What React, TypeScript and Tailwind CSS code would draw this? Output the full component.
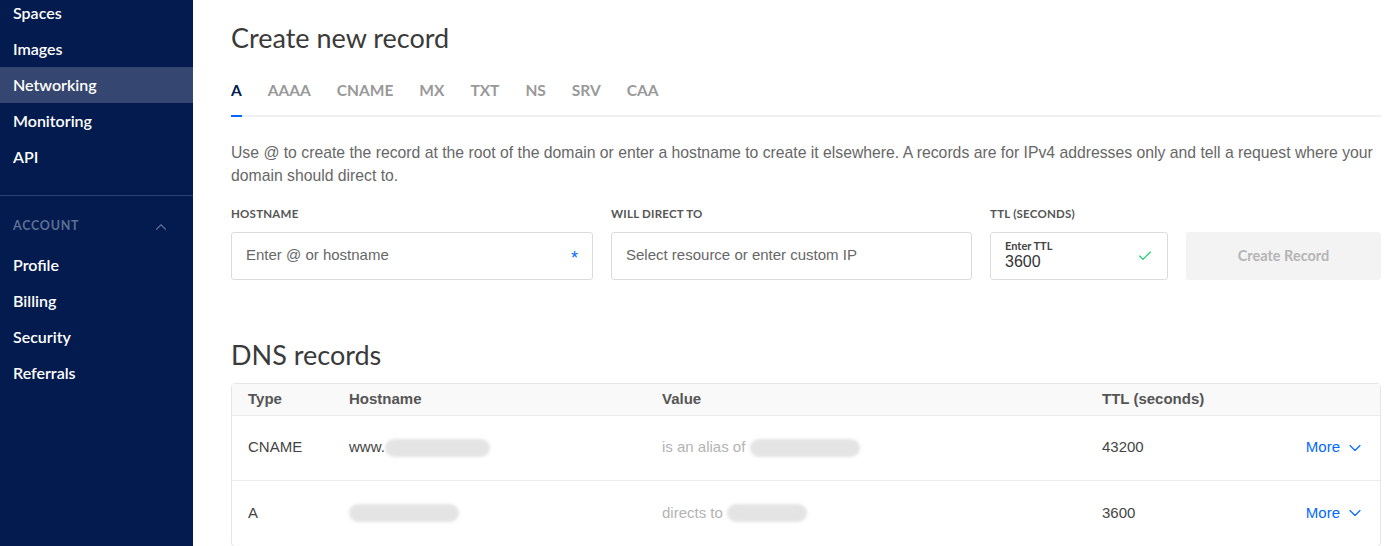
import { ChevronDown, ChevronUp, Check } from 'lucide-react';

const sideTop = ['Spaces', 'Images', 'Networking', 'Monitoring', 'API'];
const sideAccount = ['Profile', 'Billing', 'Security', 'Referrals'];
const tabs = ['A', 'AAAA', 'CNAME', 'MX', 'TXT', 'NS', 'SRV', 'CAA'];

const display = { fontFamily: 'Lato, "Open Sans", sans-serif' };
const row = 'grid grid-cols-[101px_313px_440px_1fr_auto] items-center pl-4 pr-[15px]';

// Blurred-out placeholder for redacted domain names
function Redacted({ w }: { w: string }) {
  return <span className={`inline-block h-[18px] ${w} rounded-full bg-[#e4e4e4] blur-[1.5px] align-middle`} />;
}

function Sidebar() {
  return (
    <aside className="w-[193px] shrink-0 bg-[#031b4e] text-white" style={display}>
      <nav className="-mt-[5px]">
        {sideTop.map((item) => (
          <div
            key={item}
            className={[
              'h-9 px-[13px] flex items-center text-[16px] font-semibold',
              item === 'Networking' ? 'bg-[#354770] font-bold' : '',
            ].join(' ')}
          >
            {item}
          </div>
        ))}
      </nav>
      <div className="mt-5 border-t border-[#2c416c]" />
      <div className="h-[51px] px-[13px] pt-[10px] flex items-center justify-between">
        <span className="text-[12.5px] font-bold tracking-[0.06em] text-[#5d6f93]">ACCOUNT</span>
        <ChevronUp className="h-[18px] w-[18px] text-[#5d6f93] mr-[10px]" strokeWidth={1.5} />
      </div>
      <nav>
        {sideAccount.map((item) => (
          <div key={item} className="h-9 px-[13px] flex items-center text-[16px] font-semibold">
            {item}
          </div>
        ))}
      </nav>
    </aside>
  );
}

function MoreLink() {
  return (
    <span className="flex items-center gap-[5px] text-[#0069ff]">
      More
      <ChevronDown className="h-[20px] w-[20px]" strokeWidth={1.4} />
    </span>
  );
}

export default function App() {
  return (
    <div
      className="flex h-[546px] overflow-hidden bg-white"
      style={{ fontFamily: '"Liberation Sans", Arial, sans-serif' }}
    >
      <Sidebar />

      <main className="flex-1 pl-[38px] pr-[14px] text-[#333]">
        <h1 className="pt-[21px] text-[27px] leading-[34px] font-normal text-[#3a3a3a]" style={display}>
          Create new record
        </h1>

        {/* Record type tabs */}
        <div className="mt-[24px] flex gap-[26px] text-[15.5px] font-bold text-[#999]" style={display}>
          {tabs.map((t) => (
            <span key={t} className={t === 'A' ? 'text-[#031b4e]' : ''}>
              {t}
            </span>
          ))}
        </div>
        <div className="mt-[13px] h-[2px] bg-[#f0f0f0] flex">
          <div className="w-[11px] h-[2px] bg-[#0069ff]" />
        </div>

        <p className="mt-[24px] text-[15.75px] leading-[23px] text-[#676767]">
          Use @ to create the record at the root of the domain or enter a hostname to create it elsewhere. A records are for IPv4 addresses only and tell a request where your domain should direct to.
        </p>

        {/* Form */}
        <div className="mt-[18px] flex gap-[18px] items-end">
          <div className="w-[362px]">
            <label className="block text-[11.5px] font-bold tracking-[0.02em] text-[#555] mb-[9px]" style={display}>
              HOSTNAME
            </label>
            <div className="h-12 border border-[#dcdcdc] rounded-[3px] px-[14px] flex items-center justify-between">
              <span className="text-[15px] text-[#676767]">Enter @ or hostname</span>
              <span className="text-[18px] text-[#0069ff] leading-none mt-[4px]">*</span>
            </div>
          </div>
          <div className="w-[361px]">
            <label className="block text-[11.5px] font-bold tracking-[0.02em] text-[#555] mb-[9px]" style={display}>
              WILL DIRECT TO
            </label>
            <div className="h-12 border border-[#dcdcdc] rounded-[3px] px-[14px] flex items-center">
              <span className="text-[15px] text-[#676767]">Select resource or enter custom IP</span>
            </div>
          </div>
          <div className="w-[178px]">
            <label className="block text-[11.5px] font-bold tracking-[0.02em] text-[#555] mb-[9px]" style={display}>
              TTL (SECONDS)
            </label>
            <div className="h-12 border border-[#dcdcdc] rounded-[3px] px-[14px] flex items-center justify-between">
              <div className="flex flex-col">
                <span className="text-[11px] font-bold text-[#444] leading-[13px]" style={display}>Enter TTL</span>
                <span className="text-[16px] text-[#333] leading-[20px]">3600</span>
              </div>
              <Check className="h-4 w-4 text-[#15cd72]" strokeWidth={1.75} />
            </div>
          </div>
          <button
            type="button"
            className="w-[195px] h-12 rounded-[3px] bg-[#f3f3f3] text-[14.5px] font-bold text-[#b5b5b5]"
            style={display}
          >
            Create Record
          </button>
        </div>

        <h2 className="mt-[58px] text-[27px] leading-[34px] font-normal text-[#3a3a3a]" style={display}>
          DNS records
        </h2>

        {/* DNS records table */}
        <div className="mt-[11px] border border-[#e5e5e5] rounded-[4px] text-[15px]">
          <div className={`h-[32px] bg-[#f9f9f9] border-b border-[#ececec] font-bold text-[#555] ${row}`}>
            <span>Type</span>
            <span>Hostname</span>
            <span>Value</span>
            <span>TTL (seconds)</span>
            <span />
          </div>
          <div className={`h-[65px] border-b border-[#ececec] text-[#444] ${row}`}>
            <span>CNAME</span>
            <span className="flex items-center">
              www.
              <Redacted w="w-[105px]" />
            </span>
            <span className="flex items-center text-[#b3b3b3]">
              is an alias of&nbsp;
              <Redacted w="w-[110px]" />
            </span>
            <span>43200</span>
            <MoreLink />
          </div>
          <div className={`h-[65px] text-[#444] ${row}`}>
            <span>A</span>
            <span className="flex items-center">
              <Redacted w="w-[110px]" />
            </span>
            <span className="flex items-center text-[#b3b3b3]">
              directs to&nbsp;
              <Redacted w="w-[80px]" />
            </span>
            <span>3600</span>
            <MoreLink />
          </div>
        </div>
      </main>
    </div>
  );
}
